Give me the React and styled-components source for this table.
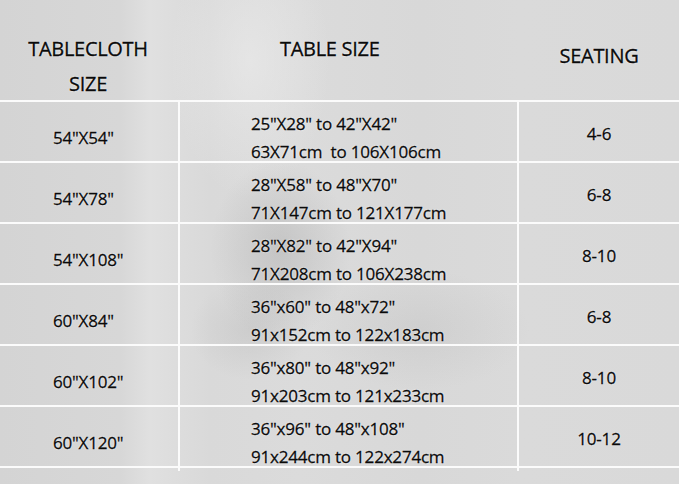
import React from "react";
import styled, { createGlobalStyle } from "styled-components";

const Global = createGlobalStyle`
  html, body { margin: 0; padding: 0; }
  body { width: 679px; height: 484px; overflow: hidden; font-family: "Open Sans", "Noto Sans", sans-serif; }
`;

const Page = styled.div`
  width: 679px;
  height: 484px;
  box-sizing: border-box;
  color: #0a0a0a;
  background:
    radial-gradient(ellipse 70px 90px at 280px 250px, rgba(155,155,155,0.35), rgba(155,155,155,0) 100%),
    radial-gradient(ellipse 60px 50px at 250px 330px, rgba(165,165,165,0.25), rgba(165,165,165,0) 100%),
    radial-gradient(ellipse 110px 60px at 420px 330px, rgba(170,170,170,0.2), rgba(170,170,170,0) 100%),
    radial-gradient(ellipse 80px 140px at 250px 60px, rgba(240,240,240,0.5), rgba(240,240,240,0) 100%),
    linear-gradient(90deg,
      #d4d4d4 0px, #d7d7d7 120px, #e0e0e0 150px, #dddddd 175px,
      #d9d9d9 210px, #dbdbdb 300px, #d8d8d8 420px, #dadada 520px, #d9d9d9 679px);
`;

const HeaderRow = styled.div`
  display: grid;
  grid-template-columns: 180px 339px 1fr;
  height: 100px;
`;

const HeadCell = styled.div`
  font-size: 20px;
  line-height: 35px;
  padding-top: ${p => p.$top}px;
  padding-left: ${p => p.$left || 0}px;
  padding-right: ${p => p.$right || 0}px;
  text-align: ${p => p.$align || "center"};
  -webkit-text-stroke: 0.35px #0a0a0a;
  text-shadow: 0 0 1px #fff, 0 0 2px rgba(255,255,255,0.9);
  letter-spacing: -0.3px;
`;

const Row = styled.div`
  display: grid;
  grid-template-columns: 180px 339px 1fr;
  height: 59px;
  border-top: 2px solid #fbfbfb;
  &:last-child { border-bottom: 2px solid #fbfbfb; }
`;

const Cell = styled.div`
  display: flex;
  flex-direction: column;
  justify-content: center;
  align-items: ${p => (p.$center ? "center" : "flex-start")};
  box-sizing: border-box;
  padding-left: ${p => p.$left || 0}px;
  padding-top: ${p => p.$top || 0}px;
  border-right: ${p => (p.$divider ? "2px solid #fbfbfb" : "none")};
  font-size: 17px;
  line-height: 28px;
  letter-spacing: -0.2px;
  white-space: pre;
  -webkit-text-stroke: 0.3px #0a0a0a;
  text-shadow: 0 0 1px #fff, 0 0 2px rgba(255,255,255,0.85);
`;

const rows = [
  ['54"X54"', '25"X28" to 42"X42"', "63X71cm  to 106X106cm", "4-6"],
  ['54"X78"', '28"X58" to 48"X70"', "71X147cm to 121X177cm", "6-8"],
  ['54"X108"', '28"X82" to 42"X94"', "71X208cm to 106X238cm", "8-10"],
  ['60"X84"', '36"x60" to 48"x72"', "91x152cm to 122x183cm", "6-8"],
  ['60"X102"', '36"x80" to 48"x92"', "91x203cm to 121x233cm", "8-10"],
  ['60"X120"', '36"x96" to 48"x108"', "91x244cm to 122x274cm", "10-12"],
];

export default function App() {
  return (
    <>
      <Global />
      <Page>
        <HeaderRow>
          <HeadCell $top={31} $right={4}>
            TABLECLOTH
            <br />
            SIZE
          </HeadCell>
          <HeadCell $top={31} $left={100} $align="left">
            TABLE SIZE
          </HeadCell>
          <HeadCell $top={38}>SEATING</HeadCell>
        </HeaderRow>
        {rows.map(r => (
          <Row key={r[0]}>
            <Cell $divider $left={53} $top={8}>{r[0]}</Cell>
            <Cell $divider $left={71} $top={8}>
              <span>{r[1]}</span>
              <span>{r[2]}</span>
            </Cell>
            <Cell $center>{r[3]}</Cell>
          </Row>
        ))}
      </Page>
    </>
  );
}
